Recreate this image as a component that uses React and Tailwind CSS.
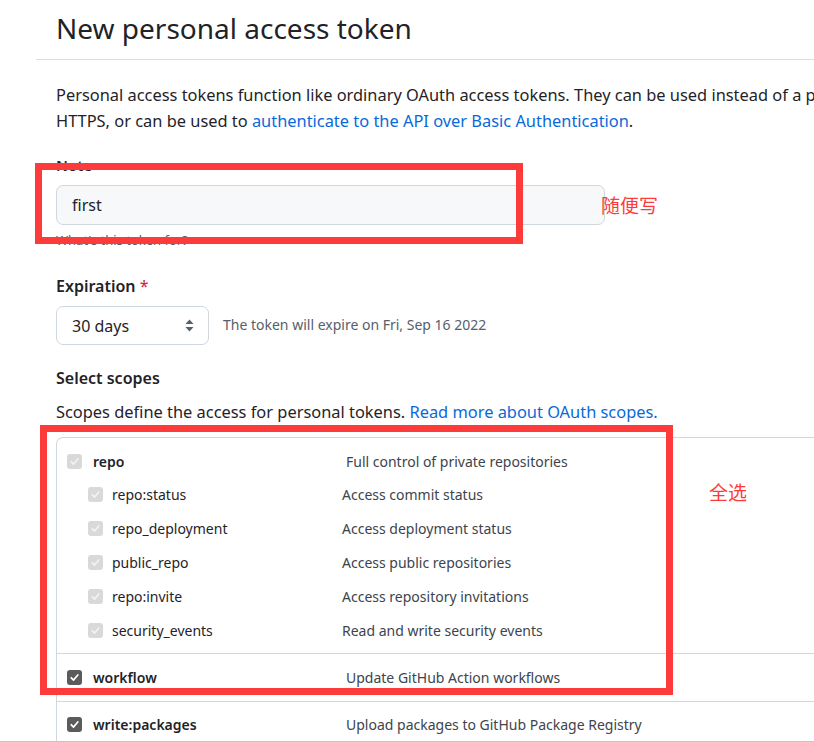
import React from "react";

const font = { fontFamily: "'Noto Sans', 'Noto Sans CJK SC', sans-serif" };

const Check = ({ checked }) => (
    <span
        className={
            "flex items-center justify-center w-[15px] h-[15px] rounded-[3px] shrink-0 " +
            (checked ? "bg-[#5b5b5b]" : "bg-[#d9d9d9]")
        }
    >
        <svg width="11" height="11" viewBox="0 0 12 12" fill="none">
            <path
                d="M2.5 6.3 L5 8.8 L9.6 3.2"
                stroke={checked ? "#ffffff" : "#f2f2f2"}
                strokeWidth="1.9"
                strokeLinecap="round"
                strokeLinejoin="round"
            />
        </svg>
    </span>
);

const MainRow = ({ name, desc, checked, h }) => (
    <div className={"flex items-center pl-[10px] " + h}>
        <Check checked={checked} />
        <span className="w-[264px] pl-[11px] text-[14px] font-semibold text-[#1f2328]">{name}</span>
        <span className="text-[14px] text-[#3d444d]">{desc}</span>
    </div>
);

const SubRow = ({ name, desc }) => (
    <div className="flex items-center pl-[31px] h-[34px]">
        <Check />
        <span className="w-[239px] pl-[9px] text-[14px] text-[#1f2328]">{name}</span>
        <span className="text-[14px] text-[#3d444d]">{desc}</span>
    </div>
);

const subScopes = [
    ["repo:status", "Access commit status"],
    ["repo_deployment", "Access deployment status"],
    ["public_repo", "Access public repositories"],
    ["repo:invite", "Access repository invitations"],
    ["security_events", "Read and write security events"],
];

export default function App() {
    return (
        <div className="relative w-[814px] h-[742px] overflow-hidden bg-white text-[#1f2328]" style={font}>
            <div className="pl-[36px]">
                <div className="pl-[20px] pt-[8px]">
                    <h1 className="text-[28px] leading-[40px] font-normal text-[#1f2328]">New personal access token</h1>
                </div>
                <div className="mt-[11px] border-t border-[#d8dee4] w-[900px]" />

                <div className="pl-[20px]">
                    <p className="mt-[22px] text-[16.4px] leading-[26px] whitespace-nowrap text-[#1f2328]">
                        Personal access tokens function like ordinary OAuth access tokens. They can be used instead of a password for Git over
                        <br />
                        HTTPS, or can be used to <span className="text-[#0969da]">authenticate to the API over Basic Authentication</span>.
                    </p>

                    <div className="mt-[21px] text-[15px] leading-[20px] font-semibold">Note</div>
                    <div className="mt-[10px] flex items-center">
                        <div className="w-[549px] h-[40px] flex items-center px-[15px] rounded-[7px] border border-[#d0d7de] bg-[#f6f8fa] text-[16px]">
                            first
                        </div>
                        <span className="ml-[-4px] text-[19px] text-[#fe3b3b]" style={{ fontFamily: "'Noto Sans CJK SC', sans-serif" }}>
                            随便写
                        </span>
                    </div>
                    <div className="mt-[6px] text-[13px] leading-[18px] text-[#57606a]">What's this token for?</div>

                    <div className="mt-[27px] text-[16px] leading-[20px] font-semibold">
                        Expiration <span className="text-[#cf222e] font-normal">*</span>
                    </div>
                    <div className="mt-[10px] flex items-center">
                        <div className="w-[153px] h-[39px] flex items-center justify-between pl-[15px] pr-[14px] rounded-[7px] border border-[#d0d7de] bg-white text-[16px]">
                            <span>30 days</span>
                            <svg width="9" height="13" viewBox="0 0 9 13">
                                <path d="M4.5 0.5 L8.5 5 L0.5 5 Z" fill="#57606a" />
                                <path d="M4.5 12.5 L8.5 8 L0.5 8 Z" fill="#57606a" />
                            </svg>
                        </div>
                        <span className="ml-[14px] text-[14px] text-[#57606a] -mt-[2px]">The token will expire on Fri, Sep 16 2022</span>
                    </div>

                    <div className="mt-[22px] text-[16px] leading-[22px] font-semibold">Select scopes</div>
                    <div className="mt-[11px] text-[16.4px] leading-[24px] whitespace-nowrap">
                        Scopes define the access for personal tokens. <span className="text-[#0969da]">Read more about OAuth scopes.</span>
                    </div>

                    <div className="mt-[13px] w-[900px] border-l border-t border-[#d0d7de] rounded-tl-[7px]">
                        <div className="pt-[7px] pb-[6px] border-b border-[#d0d7de]">
                            <MainRow name="repo" desc="Full control of private repositories" h="h-[32px]" />
                            {subScopes.map(([n, d]) => (
                                <SubRow key={n} name={n} desc={d} />
                            ))}
                        </div>
                        <div className="border-b border-[#d0d7de]">
                            <MainRow name="workflow" desc="Update GitHub Action workflows" checked h="h-[47px]" />
                        </div>
                        <MainRow name="write:packages" desc="Upload packages to GitHub Package Registry" checked h="h-[45px]" />
                    </div>
                </div>
            </div>

            {/* annotations drawn over the page */}
            <div className="absolute left-[35px] top-[163px] w-[488px] h-[81px] border-[7px] border-[#fe3b3b]" />
            <div className="absolute left-[40px] top-[425px] w-[633px] h-[270px] border-[7px] border-[#fe3b3b]" />
            <span
                className="absolute left-[709px] top-[479px] text-[19px] leading-[26px] text-[#fe3b3b]"
                style={{ fontFamily: "'Noto Sans CJK SC', sans-serif" }}
            >
                全选
            </span>
            <div className="absolute left-0 bottom-0 w-full h-[1px] bg-[#b9c8d4]" />
        </div>
    );
}
